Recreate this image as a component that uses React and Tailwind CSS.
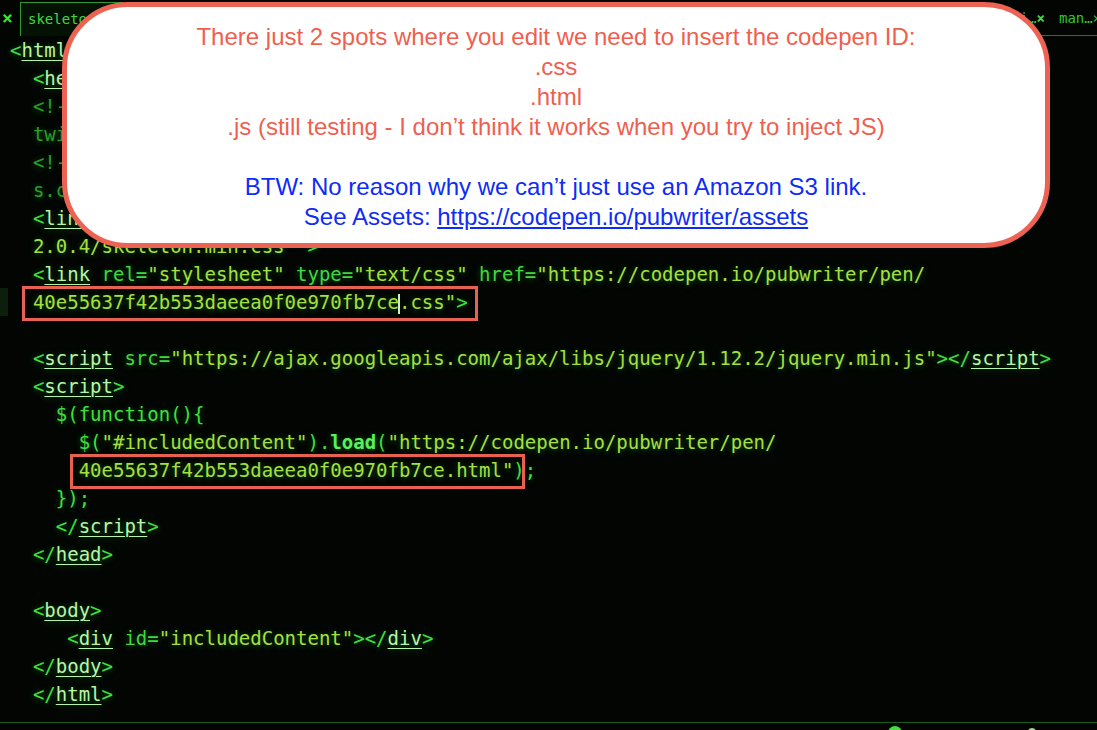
import React from "react";

const B = "text-[#3fe03f]"; // bracket green
const T = "text-[#b8f5a8] underline underline-offset-[3px] decoration-1"; // tag name
const A = "text-[#3fd83f]"; // attribute
const S = "text-[#a6e03e]"; // string
const C = "text-[#2c9c2c]"; // comment

function Tag({ close, name, children, end = ">" }) {
  return (
    <>
      <span className={B}>{close ? "</" : "<"}</span>
      <span className={T}>{name}</span>
      {children}
      {end && <span className={B}>{end}</span>}
    </>
  );
}

function Line({ indent = 0, children, active }) {
  return (
    <div className="h-[28px] leading-[28px] whitespace-pre relative">
      {active && <span className="absolute left-[-10px] top-0 h-[28px] w-[8px] bg-[#0c1f0c]" />}
      {" ".repeat(indent)}
      {children}
    </div>
  );
}

function Box({ children, className }) {
  return (
    <span className="relative">
      {children}
      <span className={"absolute border-[3px] border-[#e8604f] pointer-events-none " + className} />
    </span>
  );
}

export default function App() {
  return (
    <div
      className="relative w-[1097px] h-[730px] overflow-hidden bg-[#020502] text-[19px]"
      style={{ fontFamily: "'DejaVu Sans Mono', monospace" }}
    >
      {/* tab bar */}
      <div className="h-[36px] flex items-start relative">
        <span className="text-[#3fe03f] text-[18px] leading-[36px] pl-[2px] w-[20px] font-bold">×</span>
        <div className="mt-[2px] h-[34px] w-[103px] border border-[#2f9a2f] border-b-0 bg-[#041204] flex items-center pl-[7px] text-[14px] text-[#3fd83f]">
          skeleton…<span className="font-bold">×</span>
        </div>
        <div className="flex-1 h-[34px] mt-[2px] border-b border-[#1f7a1f] flex items-center justify-end gap-[14px] text-[14px] text-[#2fc42f]">
          <span>
            ali…<span className="text-[#3fe03f] font-bold">×</span>
          </span>
          <span className="w-[38px] overflow-hidden whitespace-nowrap">man…×</span>
        </div>
      </div>

      {/* code */}
      <div className="pl-[10px] [text-shadow:0_1px_6px_rgba(80,255,80,0.35)]">
        <Line><Tag name="html" /></Line>
        <Line indent={2}><Tag name="head" /></Line>
        <Line indent={2}><span className={C}>{"<!-- twitter bootstrap -->"}</span></Line>
        <Line indent={2}><span className={C}>{"twitter-bootstrap/3.3.6"}</span></Line>
        <Line indent={2}><span className={C}>{"<!-- skeleton -->"}</span></Line>
        <Line indent={2}><span className={C}>{"s.com/skeleton"}</span></Line>
        <Line indent={2}>
          <Tag name="link" end="">
            <span className={A}> rel=</span><span className={S}>"stylesheet"</span>
            <span className={A}> href=</span><span className={S}>"https://cdnjs.cloudflare.com/ajax/libs/skeleton/</span>
          </Tag>
        </Line>
        <Line indent={2}><span className={S}>2.0.4/skeleton.min.css"</span><span className={B}>{" >"}</span></Line>
        <Line indent={2}>
          <Tag name="link" end="">
            <span className={A}> rel=</span><span className={S}>"stylesheet"</span>
            <span className={A}> type=</span><span className={S}>"text/css"</span>
            <span className={A}> href=</span><span className={S}>"https://codepen.io/pubwriter/pen/</span>
          </Tag>
        </Line>
        <Line indent={2} active>
          <Box className="left-[-11px] right-[-10px] top-[-5px] bottom-[-8px]">
            <span className={S}>40e55637f42b553daeea0f0e970fb7ce</span>
            <span className="inline-block w-[2px] h-[20px] bg-[#c8f0c8] align-middle -mx-[1px]" />
            <span className={S}>.css"</span>
            <span className={B}>&gt;</span>
          </Box>
        </Line>
        <Line />
        <Line indent={2}>
          <Tag name="script" end="">
            <span className={A}> src=</span><span className={S}>"https://ajax.googleapis.com/ajax/libs/jquery/1.12.2/jquery.min.js"</span>
            <span className={B}>&gt;</span>
          </Tag>
          <Tag close name="script" />
        </Line>
        <Line indent={2}><Tag name="script" /></Line>
        <Line indent={4}><span className="text-[#3fe03f]">$(function(){"{"}</span></Line>
        <Line indent={6}>
          <span className="text-[#3fe03f]">$(</span>
          <span className={S}>"#includedContent"</span>
          <span className="text-[#3fe03f]">).</span>
          <span className="text-[#5af05a] font-bold">load</span>
          <span className="text-[#3fe03f]">(</span>
          <span className={S}>"https://codepen.io/pubwriter/pen/</span>
        </Line>
        <Line indent={6}>
          <Box className="left-[-9px] right-[-12px] top-[-5px] bottom-[-8px]">
            <span className={S}>40e55637f42b553daeea0f0e970fb7ce.html"</span>
          </Box>
          <span className="text-[#3fe03f]">);</span>
        </Line>
        <Line indent={4}><span className="text-[#3fe03f]">{"});"}</span></Line>
        <Line indent={4}><Tag close name="script" /></Line>
        <Line indent={2}><Tag close name="head" /></Line>
        <Line />
        <Line indent={2}><Tag name="body" /></Line>
        <Line indent={5}>
          <Tag name="div" end="">
            <span className={A}> id=</span><span className={S}>"includedContent"</span>
            <span className={B}>&gt;</span>
          </Tag>
          <Tag close name="div" />
        </Line>
        <Line indent={2}><Tag close name="body" /></Line>
        <Line indent={2}><Tag close name="html" /></Line>
      </div>

      {/* status bar */}
      <div className="absolute left-0 right-0 top-[722px] h-[8px] border-t border-[#1a5a1a] bg-[#020502]">
        <span className="absolute left-[888px] top-[3px] w-[14px] h-[14px] rounded-full bg-[#3fe03f]" />
        <span className="absolute left-[1028px] top-[5px] w-[8px] h-[8px] rounded-full bg-[#9fd09f]" />
      </div>

      {/* note popup */}
      <div
        className="absolute left-[62px] top-[2px] w-[988px] h-[246px] rounded-[66px] border-[5px] border-[#ec6353] bg-white flex flex-col items-center pt-[15px] text-[24px] leading-[30px] text-[#ef5f4f]"
        style={{ fontFamily: "'Liberation Sans', Arial, sans-serif" }}
      >
        <div>There just 2 spots where you edit we need to insert the codepen ID:</div>
        <div>.css</div>
        <div>.html</div>
        <div>.js (still testing - I don’t think it works when you try to inject JS)</div>
        <div className="h-[30px]" />
        <div className="text-[#0f2cf7]">BTW: No reason why we can’t just use an Amazon S3 link.</div>
        <div className="text-[#0f2cf7]">
          See Assets: <span className="underline">https://codepen.io/pubwriter/assets</span>
        </div>
      </div>
    </div>
  );
}
